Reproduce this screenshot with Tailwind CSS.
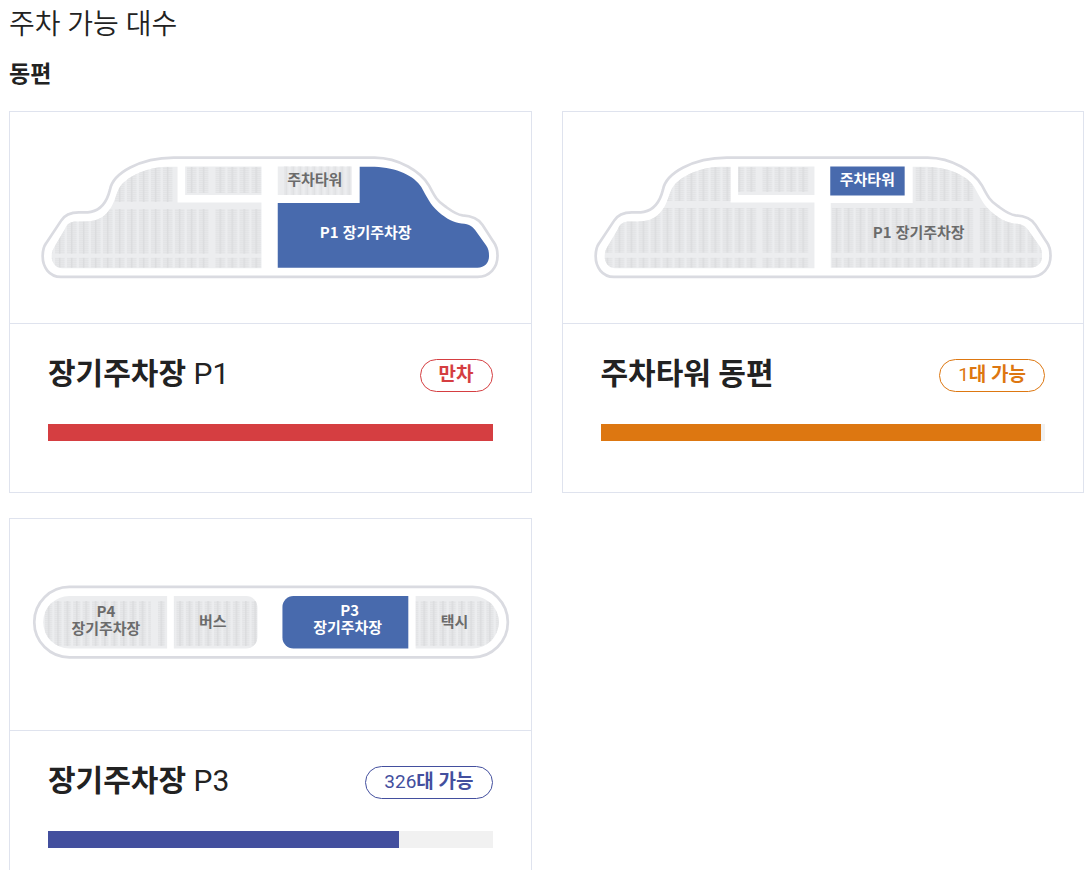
<!DOCTYPE html>
<html lang="ko">
<head>
  <meta charset="UTF-8" />
  <meta name="viewport" content="width=device-width, initial-scale=1" />
  <title>주차 가능 대수</title>
  <script src="https://cdn.jsdelivr.net/npm/@tailwindcss/browser@4"></script>
</head>
<body class="bg-white text-[#222222] font-['Roboto','Noto_Sans_CJK_KR',sans-serif] pl-[9px] pr-[3px]">

  <!-- shared shapes for the parking maps -->
  <svg width="0" height="0" class="absolute" aria-hidden="true">
    <defs>
      <pattern id="slotsA" patternUnits="userSpaceOnUse" x="55" y="167" width="12" height="2">
        <path d="M0 0h9.500v2H0z" fill="#e7e8ea" />
        <path d="M0 1h9.500v1H0z" fill="#e2e3e5" />
        <path d="M4 0h1.500v2H4z" fill="#dbdcde" />
      </pattern>
      <pattern id="slotsB" href="#slotsA" x="215.7" />
      <pattern id="slotsC" href="#slotsA" x="61.7" />
      <pattern id="slotsD" href="#slotsA" x="209.7" />
      <pattern id="slotsE" href="#slotsA" x="279" />
      <pattern id="slotsF" href="#slotsA" x="427" />
      <pattern id="slotsG" patternUnits="userSpaceOnUse" x="45" y="601" width="9.4" height="2">
        <path d="M0 0h7v2H0z" fill="#e7e8ea" />
        <path d="M0 1h7v1H0z" fill="#e2e3e5" />
        <path d="M3 0h1.300v2H3z" fill="#dadbdd" />
      </pattern>
      <pattern id="slotsH" patternUnits="userSpaceOnUse" x="284" y="167" width="7" height="4">
        <path d="M0 0h4.500v4H0z" fill="#e6e7e9" />
        <path d="M2 0h1v4H2z" fill="#dedfe1" />
      </pattern>
      <path id="outline" d="M61 277C49 277 42.7 267 42.7 256.500C42.700 251 43.500 247 46 243.500L61 221C64 216 70 212.500 79 212.500C84 212.500 87 212.800 91 212C101 210 107 202 110 190C113 173 140 158 174 157.700H375C400 158 421 172 429 185C434 194 436 200 445 206C452 211 456 214.500 463 215.500C473 216 479 219 483 225L494 242C497 246 498 250 498 256C498 268 490 277 478 277Z" />
      <path id="lotWest" d="M62 268.300C56 268.300 51.700 263 51.700 256.700C51.700 253 52.500 250 54.500 247L65 229C67 224 71 221.700 76 221.700L84 221.500C94 221.500 102 219 107 213C114 205 115 198 118 191C123 177 148 167 166 166.700H177.700V202.700H261.700V268.300Z" />
      <path id="lotEast" d="M278 203H360V166.700H375C397 167.500 415 176 421.700 187C428 198 430 204 439 212C447 219 454 222.500 462 223.500C470 224 474 227 477 232L486.500 245.500C489 249 489.500 252 489.500 256.500C489.500 263 485 268 478 268H278Z" />
      <clipPath id="clipWest"><use href="#lotWest" /></clipPath>
      <clipPath id="clipEast"><use href="#lotEast" /></clipPath>
      <path id="p4" d="M69.500 596H167.300V648.500H69.500A26.200 26.200 0 0 1 69.500 596Z" />
      <path id="bus" d="M174 596H246.500A11 11 0 0 1 257.500 607V637.500A11 11 0 0 1 246.500 648.500H174Z" />
      <path id="taxi" d="M416 596H473A26.200 26.200 0 0 1 473 648.500H416Z" />
      <clipPath id="clipP3"><use href="#p4" /><use href="#bus" /><use href="#taxi" /></clipPath>
    </defs>
  </svg>

  <h1 class="text-[28px] leading-[50px] font-[350]">주차 가능 대수</h1>
  <h2 class="mt-2 mb-5 text-[23px] leading-[33px] font-bold">동편</h2>

  <div class="grid grid-cols-2 gap-x-[30px] gap-y-[25px]">

    <!-- P1 -->
    <section class="border border-[#dfe3ee]">
      <div class="border-b border-[#dfe3ee]">
        <svg viewBox="10 112 521 211" class="block w-full" role="img" aria-label="P1 장기주차장">
          <use href="#outline" fill="#fff" stroke="#dadbe1" stroke-width="2.700" />
          <use href="#lotWest" fill="#ecedef" />
          <g clip-path="url(#clipWest)">
            <path d="M50 167H173V202H50zM50 209H209V254H50zM50 258H209V268H50z" fill="url(#slotsA)" />
            <path d="M215 209H262V254H215zM215 258H262V268H215z" fill="url(#slotsB)" />
          </g>
          <path d="M185.300 166.500H261.700V195H185.300z" fill="#ecedef" />
          <path d="M187 167H209V193H187z" fill="url(#slotsA)" />
          <path d="M215 167H261.700V193H215z" fill="url(#slotsB)" />
          <path d="M278 166.500H352V195H278z" fill="#ecedef" />
          <path d="M284 166.500H352V195H284z" fill="url(#slotsH)" />
          <use href="#lotEast" fill="#486aad" />
          <g class="text-[15px] font-bold font-['Noto_Sans_CJK_KR',sans-serif]" text-anchor="middle">
            <text x="315" y="185" fill="#6b6b6b">주차타워</text>
            <text x="366" y="238" fill="#fff">P1 장기주차장</text>
          </g>
        </svg>
      </div>
      <div class="px-[38px] pt-[35px] pb-[51px]">
        <div class="flex items-start justify-between">
          <h3 class="text-[30px] leading-[33px] font-bold -mt-0.5">장기주차장 <span class="font-normal">P1</span></h3>
          <p class="border border-[#d53e41] rounded-full px-[18px] pb-0.5 text-[19px] leading-[29px] font-bold text-[#d53e41]">만차</p>
        </div>
        <div class="mt-8 h-[17px] bg-[#f1f1f1]" role="progressbar" aria-label="장기주차장 P1" aria-valuenow="100">
          <div class="h-full bg-[#d53e41]" style="width: 100%"></div>
        </div>
      </div>
    </section>

    <!-- tower -->
    <section class="border border-[#dfe3ee]">
      <div class="border-b border-[#dfe3ee]">
        <svg viewBox="10 112 521 211" class="block w-full" role="img" aria-label="주차타워">
          <use href="#outline" fill="#fff" stroke="#dadbe1" stroke-width="2.700" />
          <use href="#lotWest" fill="#ecedef" />
          <g clip-path="url(#clipWest)">
            <path d="M50 167H178V201H50zM50 208H204V253H50zM50 258H204V268H50z" fill="url(#slotsC)" />
            <path d="M209 208H256V253H209zM209 258H256V268H209z" fill="url(#slotsD)" />
          </g>
          <path d="M185.300 166.500H261.700V195H185.300z" fill="#ecedef" />
          <path d="M185.300 167H203V192H185.300z" fill="url(#slotsC)" />
          <path d="M209 167H256V192H209z" fill="url(#slotsD)" />
          <use href="#lotEast" fill="#ecedef" />
          <g clip-path="url(#clipEast)">
            <path d="M362 167H421V201H362zM279 208H421V253H279zM279 258H421V268H279z" fill="url(#slotsE)" />
            <path d="M427 208H490V253H427zM427 258H490V268H427z" fill="url(#slotsF)" />
          </g>
          <path d="M277.500 166.500H352V195.500H277.500z" fill="#486aad" />
          <g class="text-[15px] font-bold font-['Noto_Sans_CJK_KR',sans-serif]" text-anchor="middle">
            <text x="314.500" y="185" fill="#fff">주차타워</text>
            <text x="366" y="238" fill="#6b6b6b">P1 장기주차장</text>
          </g>
        </svg>
      </div>
      <div class="px-[38px] pt-[35px] pb-[51px]">
        <div class="flex items-start justify-between">
          <h3 class="text-[30px] leading-[33px] font-bold -mt-0.5">주차타워 동편</h3>
          <p class="border border-[#dd7711] rounded-full px-[18px] pb-0.5 text-[19px] leading-[29px] font-bold text-[#dd7711]"><span class="font-normal">1</span>대 가능</p>
        </div>
        <div class="mt-8 h-[17px] bg-[#f1f1f1]" role="progressbar" aria-label="주차타워 동편" aria-valuenow="99">
          <div class="h-full bg-[#dd7711]" style="width: 99%"></div>
        </div>
      </div>
    </section>

    <!-- P3 -->
    <section class="border border-[#dfe3ee]">
      <div class="border-b border-[#dfe3ee]">
        <svg viewBox="10 519 521 211" class="block w-full" role="img" aria-label="P3 장기주차장">
          <rect x="34.300" y="587" width="474" height="70.500" rx="35.200" fill="#fff" stroke="#dadbe1" stroke-width="2.700" />
          <g fill="#ecedef">
            <use href="#p4" />
            <use href="#bus" />
            <use href="#taxi" />
          </g>
          <g clip-path="url(#clipP3)">
            <path d="M43 601H151V646H43zM158 601H167.300V646H158zM174 601H258V646H174zM416 601H500V646H416z" fill="url(#slotsG)" />
          </g>
          <path d="M293.700 596H408.700V648.500H293.700A11 11 0 0 1 282.700 637.500V607A11 11 0 0 1 293.700 596Z" fill="#486aad" />
          <g class="text-[15px] font-bold font-['Noto_Sans_CJK_KR',sans-serif]" text-anchor="middle" fill="#6b6b6b">
            <text><tspan x="106" y="617">P4</tspan><tspan x="106" y="634">장기주차장</tspan></text>
            <text x="213" y="627">버스</text>
            <text fill="#fff"><tspan x="350" y="616">P3</tspan><tspan x="348" y="633">장기주차장</tspan></text>
            <text x="455" y="627">택시</text>
          </g>
        </svg>
      </div>
      <div class="px-[38px] pt-[35px] pb-[51px]">
        <div class="flex items-start justify-between">
          <h3 class="text-[30px] leading-[33px] font-bold -mt-0.5">장기주차장 <span class="font-normal">P3</span></h3>
          <p class="border border-[#434f9e] rounded-full px-[18px] pb-0.5 text-[19px] leading-[29px] font-bold text-[#434f9e]"><span class="font-normal">326</span>대 가능</p>
        </div>
        <div class="mt-8 h-[17px] bg-[#f1f1f1]" role="progressbar" aria-label="장기주차장 P3" aria-valuenow="79">
          <div class="h-full bg-[#434f9e]" style="width: 79%"></div>
        </div>
      </div>
    </section>

  </div>
</body>
</html>
